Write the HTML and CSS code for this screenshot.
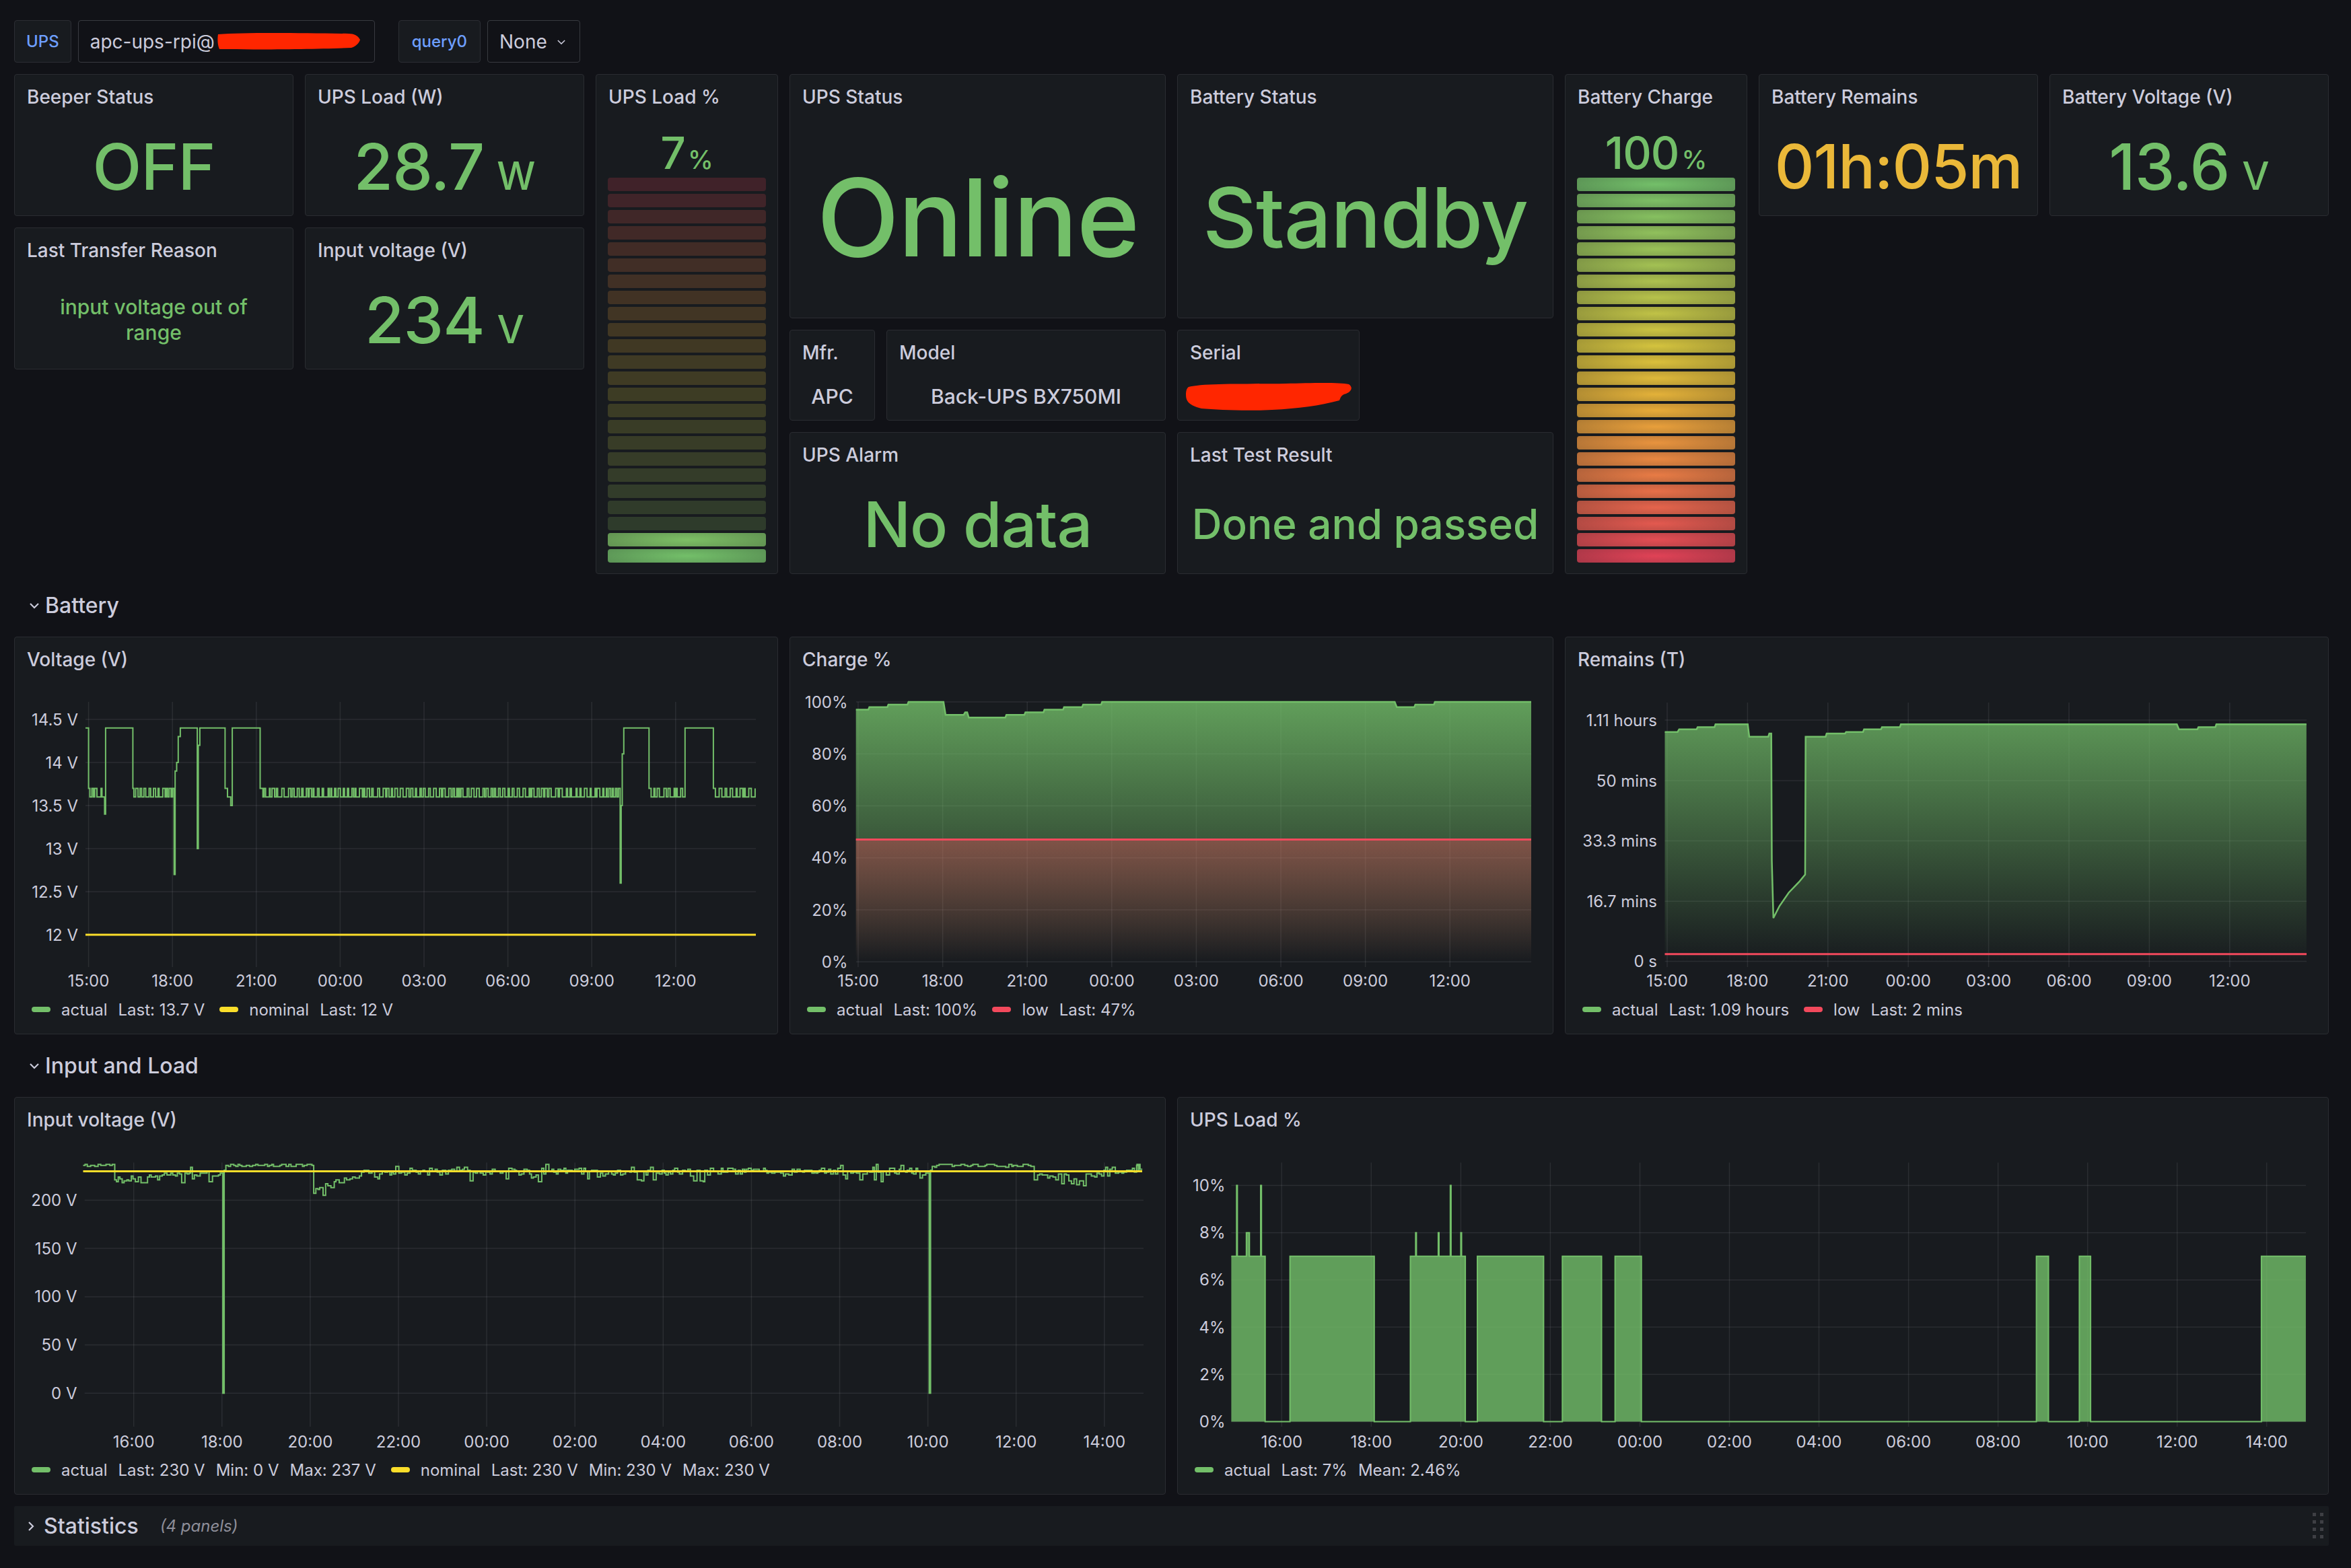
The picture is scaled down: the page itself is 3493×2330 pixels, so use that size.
FILE: index.html
```html
<!DOCTYPE html>
<html lang="en">
<head>
<meta charset="utf-8">
<title>UPS Dashboard</title>
<link rel="stylesheet" href="styles.css">
</head>
<body>
<div class="topbar">
  <div class="var-label">UPS</div>
  <div class="var-input">apc-ups-rpi@<svg class="redact-host" width="214" height="28" viewBox="0 0 214 28"><path d="M2 4 C40 1 120 2 196 3 C204 3 210 6 213 12 C211 18 206 22 200 24 C150 26 60 27 4 26 C1 20 1 10 2 4 Z" fill="#ff2600"/></svg></div>
  <div class="var-label q">query0</div>
  <div class="var-select">None<svg class="chev" width="14" height="8" viewBox="0 0 14 8"><path d="M1 1 L7 7 L13 1" fill="none" stroke="#ccccdc" stroke-width="1.8"/></svg></div>
</div>

<div class="grid">
  <!-- row 1 stats -->
  <div class="panel p-beeper">
    <div class="ph">Beeper Status</div>
    <div class="stat-body"><span class="val v95">OFF</span></div>
  </div>
  <div class="panel p-loadw">
    <div class="ph">UPS Load (W)</div>
    <div class="stat-body"><span class="val v95">28.7<span class="unit">W</span></span></div>
  </div>
  <div class="panel p-loadpct">
    <div class="ph">UPS Load %</div>
    <div class="gauge">
      <div class="gauge-val">7<span class="gunit">%</span></div>
      <div class="segs" id="segs-load"></div>
    </div>
  </div>
  <div class="panel p-upsstatus">
    <div class="ph">UPS Status</div>
    <div class="stat-body"><span class="val v-online">Online</span></div>
  </div>
  <div class="panel p-batstatus">
    <div class="ph">Battery Status</div>
    <div class="stat-body"><span class="val v-standby">Standby</span></div>
  </div>
  <div class="panel p-batcharge">
    <div class="ph">Battery Charge</div>
    <div class="gauge">
      <div class="gauge-val">100<span class="gunit">%</span></div>
      <div class="segs" id="segs-charge"></div>
    </div>
  </div>
  <div class="panel p-remains">
    <div class="ph">Battery Remains</div>
    <div class="stat-body"><span class="val v92 yellow">01h:05m</span></div>
  </div>
  <div class="panel p-batvolt">
    <div class="ph">Battery Voltage (V)</div>
    <div class="stat-body"><span class="val v95">13.6<span class="unit">V</span></span></div>
  </div>

  <div class="panel p-transfer">
    <div class="ph">Last Transfer Reason</div>
    <div class="stat-body"><span class="val v-reason">input voltage out of range</span></div>
  </div>
  <div class="panel p-involt">
    <div class="ph">Input voltage (V)</div>
    <div class="stat-body"><span class="val v95">234<span class="unit">V</span></span></div>
  </div>

  <div class="panel p-mfr">
    <div class="ph">Mfr.</div>
    <div class="stat-body"><span class="val v-small">APC</span></div>
  </div>
  <div class="panel p-model">
    <div class="ph">Model</div>
    <div class="stat-body"><span class="val v-small">Back-UPS BX750MI</span></div>
  </div>
  <div class="panel p-serial">
    <div class="ph">Serial</div>
    <div class="stat-body serial-body"><svg width="250" height="44" viewBox="0 0 250 44"><path d="M6 8 C30 2 90 4 150 3 C190 2 230 1 244 4 C250 8 249 14 240 18 C232 20 232 24 230 28 C200 36 170 40 130 42 C90 44 50 42 25 40 C8 36 2 30 2 20 C2 14 3 10 6 8 Z" fill="#ff2600"/></svg></div>
  </div>

  <div class="panel p-alarm">
    <div class="ph">UPS Alarm</div>
    <div class="stat-body"><span class="val v-nodata">No data</span></div>
  </div>
  <div class="panel p-test">
    <div class="ph">Last Test Result</div>
    <div class="stat-body"><span class="val v-done">Done and passed</span></div>
  </div>

  <!-- Battery row -->
  <div class="row-h r-battery"><svg class="row-chev" width="16" height="10" viewBox="0 0 16 10"><path d="M2 2 L8 8 L14 2" fill="none" stroke="#ccccdc" stroke-width="2.2"/></svg>Battery</div>

  <div class="panel p-vchart">
    <div class="ph">Voltage (V)</div>
    <svg class="chart" width="1133" height="472" viewBox="1 64 1133 472">
      <g class="grid-l">
        <path d="M106 123H1102M106 187H1102M106 251H1102M106 315H1102M106 379H1102M106 443H1102"/>
        <path d="M110.6 97V491M235.2 97V491M359.8 97V491M484.4 97V491M609 97V491M733.6 97V491M858.2 97V491M982.8 97V491"/>
      </g>
      <g class="ylab">
        <text x="95" y="131.5">14.5 V</text><text x="95" y="195.5">14 V</text><text x="95" y="259.5">13.5 V</text>
        <text x="95" y="323.5">13 V</text><text x="95" y="387.5">12.5 V</text><text x="95" y="451.5">12 V</text>
      </g>
      <g class="xlab">
        <text x="110.6" y="520">15:00</text><text x="235.2" y="520">18:00</text><text x="359.8" y="520">21:00</text><text x="484.4" y="520">00:00</text>
        <text x="609" y="520">03:00</text><text x="733.6" y="520">06:00</text><text x="858.2" y="520">09:00</text><text x="982.8" y="520">12:00</text>
      </g>
      <path d="M106 443H1102" stroke="#fade2a" stroke-width="3" fill="none"/>
      <path id="v-actual" d="" stroke="#73bf69" stroke-width="2" fill="none"/>
    </svg>
    <div class="legend">
      <div class="lg-item"><span class="lg-mark green"></span>actual<span class="lg-stat">Last: 13.7 V</span></div>
      <div class="lg-item"><span class="lg-mark yellowm"></span>nominal<span class="lg-stat">Last: 12 V</span></div>
    </div>
  </div>

  <div class="panel p-cchart">
    <div class="ph">Charge %</div>
    <svg class="chart" width="1133" height="472" viewBox="1 64 1133 472">
      <defs>
        <linearGradient id="gC" gradientUnits="userSpaceOnUse" x1="0" y1="97" x2="0" y2="483.3">
          <stop offset="0" stop-color="#73bf69" stop-opacity="0.8"/><stop offset="1" stop-color="#73bf69" stop-opacity="0"/>
        </linearGradient>
        <linearGradient id="gCr" gradientUnits="userSpaceOnUse" x1="0" y1="97" x2="0" y2="483.3">
          <stop offset="0" stop-color="#f2495c" stop-opacity="0.8"/><stop offset="1" stop-color="#f2495c" stop-opacity="0"/>
        </linearGradient>
      </defs>
      <g class="grid-l">
        <path d="M99 97H1102M99 174.3H1102M99 251.5H1102M99 328.8H1102M99 406H1102M99 483.3H1102"/>
        <path d="M102 97V491M227.6 97V491M353.2 97V491M478.8 97V491M604.4 97V491M730 97V491M855.6 97V491M981.2 97V491"/>
      </g>
      <g class="ylab">
        <text x="86.5" y="105.5">100%</text><text x="86.5" y="182.8">80%</text><text x="86.5" y="260">60%</text>
        <text x="86.5" y="337.3">40%</text><text x="86.5" y="414.5">20%</text><text x="86.5" y="491.8">0%</text>
      </g>
      <g class="xlab">
        <text x="102" y="520">15:00</text><text x="227.6" y="520">18:00</text><text x="353.2" y="520">21:00</text><text x="478.8" y="520">00:00</text>
        <text x="604.4" y="520">03:00</text><text x="730" y="520">06:00</text><text x="855.6" y="520">09:00</text><text x="981.2" y="520">12:00</text>
      </g>
      <path id="c-fill" d="" fill="url(#gC)"/>
      <path d="M98.7 301.6H1102V483.3H98.7Z" fill="url(#gCr)"/>
      <path id="c-line" d="" stroke="#73bf69" stroke-width="2.5" fill="none"/>
      <path d="M98.7 301.6H1102" stroke="#f2495c" stroke-width="3" fill="none"/>
    </svg>
    <div class="legend">
      <div class="lg-item"><span class="lg-mark green"></span>actual<span class="lg-stat">Last: 100%</span></div>
      <div class="lg-item"><span class="lg-mark red"></span>low<span class="lg-stat">Last: 47%</span></div>
    </div>
  </div>

  <div class="panel p-rchart">
    <div class="ph">Remains (T)</div>
    <svg class="chart" width="1133" height="472" viewBox="1 64 1133 472">
      <defs>
        <linearGradient id="gR" gradientUnits="userSpaceOnUse" x1="0" y1="98" x2="0" y2="482.5">
          <stop offset="0" stop-color="#73bf69" stop-opacity="0.8"/><stop offset="1" stop-color="#73bf69" stop-opacity="0"/>
        </linearGradient>
        <linearGradient id="gRr" gradientUnits="userSpaceOnUse" x1="0" y1="98" x2="0" y2="482.5">
          <stop offset="0" stop-color="#f2495c" stop-opacity="0.8"/><stop offset="1" stop-color="#f2495c" stop-opacity="0"/>
        </linearGradient>
      </defs>
      <g class="grid-l">
        <path d="M148.5 124H1102M148.5 214H1102M148.5 303.4H1102M148.5 393.2H1102M148.5 482.5H1102"/>
        <path d="M152 98V491M271.4 98V491M390.8 98V491M510.2 98V491M629.6 98V491M749 98V491M868.4 98V491M987.8 98V491"/>
      </g>
      <g class="ylab">
        <text x="137" y="132.5">1.11 hours</text><text x="137" y="222.5">50 mins</text><text x="137" y="311.9">33.3 mins</text>
        <text x="137" y="401.7">16.7 mins</text><text x="137" y="491">0 s</text>
      </g>
      <g class="xlab">
        <text x="152" y="520">15:00</text><text x="271.4" y="520">18:00</text><text x="390.8" y="520">21:00</text><text x="510.2" y="520">00:00</text>
        <text x="629.6" y="520">03:00</text><text x="749" y="520">06:00</text><text x="868.4" y="520">09:00</text><text x="987.8" y="520">12:00</text>
      </g>
      <path id="r-fill" d="" fill="url(#gR)"/>
      <path d="M148.5 471.8H1102V482.5H148.5Z" fill="url(#gRr)"/>
      <path id="r-line" d="" stroke="#73bf69" stroke-width="2.5" fill="none"/>
      <path d="M148.5 471.8H1102" stroke="#f2495c" stroke-width="3" fill="none"/>
    </svg>
    <div class="legend">
      <div class="lg-item"><span class="lg-mark green"></span>actual<span class="lg-stat">Last: 1.09 hours</span></div>
      <div class="lg-item"><span class="lg-mark red"></span>low<span class="lg-stat">Last: 2 mins</span></div>
    </div>
  </div>

  <!-- Input and Load row -->
  <div class="row-h r-input"><svg class="row-chev" width="16" height="10" viewBox="0 0 16 10"><path d="M2 2 L8 8 L14 2" fill="none" stroke="#ccccdc" stroke-width="2.2"/></svg>Input and Load</div>

  <div class="panel p-ivchart">
    <div class="ph">Input voltage (V)</div>
    <svg class="chart" width="1709" height="472" viewBox="1 64 1709 472">
      <g class="grid-l">
        <path d="M104.7 153.4H1678M104.7 225.1H1678M104.7 296.9H1678M104.7 368.6H1678M104.7 440.3H1678"/>
        <path d="M177.7 97.5V490M308.8 97.5V490M439.9 97.5V490M571 97.5V490M702.1 97.5V490M833.2 97.5V490M964.3 97.5V490M1095.4 97.5V490M1226.5 97.5V490M1357.6 97.5V490M1488.7 97.5V490M1619.8 97.5V490"/>
      </g>
      <g class="ylab">
        <text x="93.5" y="161.9">200 V</text><text x="93.5" y="233.6">150 V</text><text x="93.5" y="305.4">100 V</text>
        <text x="93.5" y="377.1">50 V</text><text x="93.5" y="448.8">0 V</text>
      </g>
      <g class="xlab">
        <text x="177.7" y="521">16:00</text><text x="308.8" y="521">18:00</text><text x="439.9" y="521">20:00</text><text x="571" y="521">22:00</text>
        <text x="702.1" y="521">00:00</text><text x="833.2" y="521">02:00</text><text x="964.3" y="521">04:00</text><text x="1095.4" y="521">06:00</text>
        <text x="1226.5" y="521">08:00</text><text x="1357.6" y="521">10:00</text><text x="1488.7" y="521">12:00</text><text x="1619.8" y="521">14:00</text>
      </g>
      <path id="iv-line" d="" stroke="#73bf69" stroke-width="2" fill="none"/>
      <path d="M102.5 110.5H1676" stroke="#fade2a" stroke-width="3" fill="none"/>
    </svg>
    <div class="legend">
      <div class="lg-item"><span class="lg-mark green"></span>actual<span class="lg-stat">Last: 230 V</span><span class="lg-stat">Min: 0 V</span><span class="lg-stat">Max: 237 V</span></div>
      <div class="lg-item"><span class="lg-mark yellowm"></span>nominal<span class="lg-stat">Last: 230 V</span><span class="lg-stat">Min: 230 V</span><span class="lg-stat">Max: 230 V</span></div>
    </div>
  </div>

  <div class="panel p-lchart">
    <div class="ph">UPS Load %</div>
    <svg class="chart" width="1709" height="472" viewBox="1 64 1709 472">
      <g class="grid-l">
        <path d="M80.4 131.5H1677M80.4 201.7H1677M80.4 271.9H1677M80.4 342.1H1677M80.4 412.3H1677M80.4 482.5H1677"/>
        <path d="M155.3 97.5V490M288.3 97.5V490M421.4 97.5V490M554.4 97.5V490M687.5 97.5V490M820.5 97.5V490M953.5 97.5V490M1086.6 97.5V490M1219.6 97.5V490M1352.7 97.5V490M1485.7 97.5V490M1618.7 97.5V490"/>
      </g>
      <g class="ylab">
        <text x="71.5" y="140">10%</text><text x="71.5" y="210.2">8%</text><text x="71.5" y="280.4">6%</text>
        <text x="71.5" y="350.6">4%</text><text x="71.5" y="420.8">2%</text><text x="71.5" y="491">0%</text>
      </g>
      <g class="xlab">
        <text x="155.3" y="521">16:00</text><text x="288.3" y="521">18:00</text><text x="421.4" y="521">20:00</text><text x="554.4" y="521">22:00</text>
        <text x="687.5" y="521">00:00</text><text x="820.5" y="521">02:00</text><text x="953.5" y="521">04:00</text><text x="1086.6" y="521">06:00</text>
        <text x="1219.6" y="521">08:00</text><text x="1352.7" y="521">10:00</text><text x="1485.7" y="521">12:00</text><text x="1618.7" y="521">14:00</text>
      </g>
      <path id="l-fill" d="" fill="#73bf69" fill-opacity="0.8"/>
      <path id="l-line" d="" stroke="#73bf69" stroke-width="2" fill="none"/>
    </svg>
    <div class="legend">
      <div class="lg-item"><span class="lg-mark green"></span>actual<span class="lg-stat">Last: 7%</span><span class="lg-stat">Mean: 2.46%</span></div>
    </div>
  </div>

  <div class="row-h r-stats collapsed"><svg class="row-chev" width="10" height="16" viewBox="0 0 10 16"><path d="M2 2 L8 8 L2 14" fill="none" stroke="#ccccdc" stroke-width="2.2"/></svg>Statistics<span class="row-count">(4 panels)</span>
    <svg class="drag" width="18" height="40" viewBox="0 0 18 40"><g fill="#3e3f44"><rect x="0" y="0" width="5" height="5"/><rect x="11" y="0" width="5" height="5"/><rect x="0" y="11" width="5" height="5"/><rect x="11" y="11" width="5" height="5"/><rect x="0" y="22" width="5" height="5"/><rect x="11" y="22" width="5" height="5"/><rect x="0" y="33" width="5" height="5"/><rect x="11" y="33" width="5" height="5"/></g></svg>
  </div>
</div>
<script src="script.js"></script>
</body>
</html>
```

FILE: styles.css
```css
* { box-sizing: border-box; }
html, body { margin: 0; padding: 0; }
body {
  width: 3493px;
  height: 2330px;
  overflow: hidden;
  background: #111217;
  color: #ccccdc;
  font-family: Inter, "Noto Sans", "Liberation Sans", sans-serif;
}

/* ---------- top variable bar ---------- */
.topbar {
  display: flex;
  align-items: center;
  height: 63px;
  margin: 30px 0 0 21px;
}
.var-label {
  height: 63px;
  display: flex;
  align-items: center;
  padding: 0 17px;
  background: #181b1f;
  border: 1px solid #2c2e34;
  border-radius: 4px;
  color: #6e9fff;
  font-size: 24px;
  font-weight: 500;
}
.var-label.q { margin-left: 35px; padding: 0 19px; }
.var-input {
  position: relative;
  width: 441px;
  height: 63px;
  margin-left: 10px;
  display: flex;
  align-items: center;
  padding-left: 17px;
  background: #111217;
  border: 1px solid #383a40;
  border-radius: 4px;
  font-size: 28px;
}
.redact-host {
  position: absolute;
  left: 205px;
  top: 16px;
}
.var-select {
  width: 138px;
  height: 63px;
  margin-left: 10px;
  display: flex;
  align-items: center;
  padding-left: 17px;
  background: #111217;
  border: 1px solid #383a40;
  border-radius: 4px;
  font-size: 28px;
}
.var-select .chev { margin-left: 15px; margin-top: 2px; width: 12px; height: 7px; }

/* ---------- dashboard grid ---------- */
.grid {
  display: grid;
  grid-template-columns: repeat(24, minmax(0, 1fr));
  grid-auto-rows: 59px;
  gap: 17px;
  margin: 17px 33px 0 21px;
}
.panel {
  background: #181b1f;
  border: 1px solid #2a2c31;
  border-radius: 4px;
  display: flex;
  flex-direction: column;
  overflow: hidden;
  min-width: 0;
}
.ph {
  flex: none;
  height: 63px;
  display: flex;
  align-items: center;
  padding: 2px 18px 0;
  font-size: 28px;
  font-weight: 500;
  color: #ccccdc;
  white-space: nowrap;
}

/* placements */
.p-beeper    { grid-column: 1 / span 3;  grid-row: 1 / span 3; }
.p-loadw     { grid-column: 4 / span 3;  grid-row: 1 / span 3; }
.p-loadpct   { grid-column: 7 / span 2;  grid-row: 1 / span 10; }
.p-upsstatus { grid-column: 9 / span 4;  grid-row: 1 / span 5; }
.p-batstatus { grid-column: 13 / span 4; grid-row: 1 / span 5; }
.p-batcharge { grid-column: 17 / span 2; grid-row: 1 / span 10; }
.p-remains   { grid-column: 19 / span 3; grid-row: 1 / span 3; }
.p-batvolt   { grid-column: 22 / span 3; grid-row: 1 / span 3; }
.p-transfer  { grid-column: 1 / span 3;  grid-row: 4 / span 3; }
.p-involt    { grid-column: 4 / span 3;  grid-row: 4 / span 3; }
.p-mfr       { grid-column: 9 / span 1;  grid-row: 6 / span 2; }
.p-model     { grid-column: 10 / span 3; grid-row: 6 / span 2; }
.p-serial    { grid-column: 13 / span 2; grid-row: 6 / span 2; }
.p-alarm     { grid-column: 9 / span 4;  grid-row: 8 / span 3; }
.p-test      { grid-column: 13 / span 4; grid-row: 8 / span 3; }
.r-battery   { grid-column: 1 / -1; grid-row: 11; }
.p-vchart    { grid-column: 1 / span 8;  grid-row: 12 / span 8; }
.p-cchart    { grid-column: 9 / span 8;  grid-row: 12 / span 8; }
.p-rchart    { grid-column: 17 / span 8; grid-row: 12 / span 8; }
.r-input     { grid-column: 1 / -1; grid-row: 20; }
.p-ivchart   { grid-column: 1 / span 12; grid-row: 21 / span 8; }
.p-lchart    { grid-column: 13 / span 12; grid-row: 21 / span 8; }
.r-stats     { grid-column: 1 / -1; grid-row: 29; }

/* ---------- stat panels ---------- */
.stat-body {
  flex: 1;
  display: flex;
  align-items: center;
  justify-content: center;
  min-height: 0;
}
.val {
  color: #73bf69;
  font-weight: 500;
  line-height: 1;
  white-space: nowrap;
}
.val.yellow { color: #eab839; }
.v95 { font-size: 95px; letter-spacing: -1px; }
.v92 { font-size: 91px; letter-spacing: -1px; }
.unit { font-size: 57px; margin-left: 19px; letter-spacing: 0; }
.v-online { font-size: 160px; letter-spacing: -2px; }
.v-standby { font-size: 124px; letter-spacing: -1px; }
.v-nodata { font-size: 93px; letter-spacing: -1px; }
.v-done { font-size: 62px; }
.v-small { font-size: 30px; color: #ccccdc; }
.v-reason {
  font-size: 30px;
  line-height: 38px;
  white-space: normal;
  text-align: center;
  max-width: 320px;
}

/* ---------- bar gauges ---------- */
.gauge {
  flex: 1;
  display: flex;
  flex-direction: column;
  padding: 0 17px 16px 17px;
  min-height: 0;
}
.gauge-val {
  margin: 20px 0 4px;
  height: 66px;
  font-size: 66px;
  line-height: 66px;
  font-weight: 500;
  color: #73bf69;
  text-align: center;
  letter-spacing: -1px;
}
.gunit { font-size: 38px; margin-left: 4px; letter-spacing: 0; }
.segs {
  flex: 1;
  display: flex;
  flex-direction: column;
  gap: 4px;
}
.seg {
  flex: 1;
  border-radius: 4px;
}

/* ---------- row headers ---------- */
.row-h {
  display: flex;
  align-items: center;
  font-size: 32px;
  font-weight: 500;
  color: #ccccdc;
}
.row-chev { margin-left: 22px; margin-right: 8px; flex: none; }
.r-stats {
  background: #181b1f;
  border-radius: 2px;
}
.r-stats .row-chev { margin-left: 20px; margin-right: 14px; }
.row-count {
  margin-left: 32px;
  font-size: 24px;
  font-style: italic;
  font-weight: 400;
  color: #8e8e99;
}
.drag { margin-left: auto; margin-right: 6px; }

/* ---------- charts ---------- */
.chart { display: block; flex: none; }
.grid-l path { stroke: rgba(204, 204, 220, 0.1); stroke-width: 1.5; fill: none; }
.ylab text, .xlab text {
  font-family: Inter, "Noto Sans", sans-serif;
  font-size: 24px;
  fill: #ccccdc;
}
.ylab text { text-anchor: end; }
.xlab text { text-anchor: middle; }
.legend {
  flex: none;
  height: 36px;
  display: flex;
  align-items: center;
  padding-left: 25px;
  font-size: 24px;
  color: #ccccdc;
  white-space: nowrap;
}
.lg-item { display: flex; align-items: center; margin-right: 22px; }
.lg-mark {
  width: 28px;
  height: 8px;
  border-radius: 4px;
  margin-right: 16px;
}
.lg-mark.green { background: #73bf69; }
.lg-mark.yellowm { background: #fade2a; }
.lg-mark.red { background: #f2495c; }
.lg-stat { margin-left: 16px; }
```

FILE: script.js
```js
(function () {
  function rng(seed) {
    var s = seed >>> 0;
    return function () {
      s = (Math.imul(s, 1664525) + 1013904223) >>> 0;
      return s / 4294967296;
    };
  }
  function f(n) { return Math.round(n * 10) / 10; }
  function stepLine(p) {
    var d = 'M' + f(p[0][0]) + ' ' + f(p[0][1]);
    for (var i = 1; i < p.length; i++) d += 'H' + f(p[i][0]) + 'V' + f(p[i][1]);
    return d;
  }
  function polyLine(p) {
    return 'M' + p.map(function (q) { return f(q[0]) + ' ' + f(q[1]); }).join('L');
  }
  function set(id, d) { var e = document.getElementById(id); if (e) e.setAttribute('d', d); }

  /* ---- Battery voltage ---- */
  (function () {
    var vx = function (z) { return z / 1.3067 - 21; };
    var vy = function (v) { return 123 + (14.5 - v) * 128; };
    var r = rng(11), P = [];
    function a(z, v) { P.push([vx(z), vy(v)]); }
    function osc(z0, z1) {
      var z = z0, hi = true;
      while (z < z1) { a(z, hi ? 13.7 : 13.6); hi = !hi; z += hi ? (2 + r() * 7) : (1.5 + r() * 4); }
    }
    a(166, 14.4); osc(172, 203); a(203, 13.4); a(205, 14.4);
    osc(258, 338); a(338, 12.7); a(340, 13.9); a(343, 14.0); a(346, 14.3); a(350, 14.4);
    a(383, 13.0); a(385, 14.2); a(388, 14.4);
    osc(437, 448); a(448, 13.5); a(451, 14.4);
    osc(505, 1204); a(1204, 12.6); a(1206, 13.5); a(1208, 14.1); a(1211, 14.4);
    osc(1260, 1330); a(1330, 14.4); osc(1385, 1466); a(1466, 13.7);
    set('v-actual', stepLine(P));
  })();

  /* ---- Charge ---- */
  (function () {
    var cx = function (z) { return z / 1.3067 - 13; };
    var cy = function (v) { return 483.3 - v * 3.863; };
    var raw = [[146,97],[170,97],[172,98],[207,98],[209,99],[246,99],[248,100],[316,100],[320,95],[355,95],[358,96],[362,96],[365,94],[436,94],[438,95],[473,95],[475,96],[510,96],[512,97],[548,97],[550,98],[585,98],[587,99],[622,99],[624,100],[1192,100],[1196,98],[1230,98],[1232,99],[1268,99],[1270,100],[1457,100]];
    var P = raw.map(function (q) { return [cx(q[0]), cy(q[1])]; });
    var line = polyLine(P);
    set('c-line', line);
    set('c-fill', line + 'L' + f(P[P.length - 1][0]) + ' 483.3L' + f(P[0][0]) + ' 483.3Z');
  })();

  /* ---- Remains ---- */
  (function () {
    var rx = function (z) { return z / 1.3143 - 25; };
    var ry = function (z) { return z / 2.529 - 7; };
    var raw = [[228,376],[253,376],[256,366],[290,366],[292,358],[325,358],[327,347],[390,347],[393,394],[430,394],[432,382],[436,382],[437,860],[440,1075],[452,1030],[470,980],[490,940],[502,912],[503,394],[542,394],[544,382],[580,382],[582,376],[615,376],[617,366],[650,366],[652,358],[687,358],[689,347],[1228,347],[1232,366],[1268,366],[1270,358],[1303,358],[1305,347],[1481,347]];
    var P = raw.map(function (q) { return [rx(q[0]), ry(q[1])]; });
    var line = polyLine(P);
    set('r-line', line);
    set('r-fill', line + 'L' + f(P[P.length - 1][0]) + ' 482.5L' + f(P[0][0]) + ' 482.5Z');
  })();

  /* ---- Input voltage ---- */
  (function () {
    var ix = function (z) { return z / 0.8909 - 21; };
    var iy = function (v) { return 440.3 - v * 1.4346; };
    var r = rng(5), P = [];
    function base(z) {
      if (z < 150) return 231.5;
      if (z < 210) return 222;
      if (z < 295) return 227.5;
      if (z < 415) return 231.5;
      if (z < 480) return 210 + (z - 415) / 65 * 17;
      if (z < 1230) return 229.5;
      if (z < 1365) return 231.5;
      if (z < 1460) return 224;
      return 231;
    }
    function amp(z) {
      if (z < 150) return 1;
      if (z < 210) return 8;
      if (z < 295) return 6;
      if (z < 415) return 1.5;
      if (z < 480) return 6;
      if (z < 1230) return 7;
      if (z < 1365) return 1.5;
      if (z < 1460) return 8;
      return 7;
    }
    var drops = [295, 1230], di = 0, z = 110;
    while (z < 1510) {
      if (di < drops.length && z >= drops[di]) {
        P.push([ix(drops[di]), iy(0)]);
        P.push([ix(drops[di] + 1.8), iy(231)]);
        z = drops[di] + 4; di++; continue;
      }
      var v = base(z) + (r() - 0.5) * amp(z);
      var big = amp(z) > 3 ? r() : 1;
      if (big < 0.08) v -= 4 + r() * 5;
      if (big > 0.96) v += 3 + r() * 3;
      v = Math.min(237, Math.round(v));
      P.push([ix(z), iy(v)]);
      z += 2 + r() * 2.5;
    }
    P.push([ix(1505), iy(237)]);
    P.push([ix(1509), iy(232)]);
    P.push([ix(1512), iy(232)]);
    set('iv-line', stepLine(P));
  })();

  /* ---- UPS load % ---- */
  (function () {
    var lx = function (z) { return z / 0.8945 - 9; };
    var ly = function (v) { return 482.5 - v * 35.1; };
    var raw = [[80,7],[87,10],[88,7],[100,8],[104,7],[119,10],[120,7],[125,0],[158,7],[270,0],[318,7],[325,8],[326,7],[355,8],[356,7],[371,10],[372,7],[385,8],[386,7],[391,0],[407,7],[495,0],[520,7],[572,0],[590,7],[625,0],[1150,7],[1166,0],[1207,7],[1222,0],[1449,7],[1508,7]];
    var P = raw.map(function (q) { return [lx(q[0]), ly(q[1])]; });
    var line = stepLine(P);
    set('l-line', line);
    var fill = 'M' + f(P[0][0]) + ' 482.5V' + f(P[0][1]);
    for (var i = 1; i < P.length; i++) fill += 'H' + f(P[i][0]) + 'V' + f(P[i][1]);
    fill += 'V482.5Z';
    set('l-fill', fill);
  })();

  /* ---- LCD bar gauges ---- */
  var stops = [[0, [115, 191, 105]], [0.45, [215, 195, 60]], [0.62, [232, 168, 56]], [0.8, [232, 118, 70]], [1, [224, 66, 86]]];
  function pal(t) {
    for (var i = 1; i < stops.length; i++) {
      if (t <= stops[i][0]) {
        var t0 = stops[i - 1][0], c0 = stops[i - 1][1], t1 = stops[i][0], c1 = stops[i][1];
        var k = (t - t0) / (t1 - t0);
        return c0.map(function (v, j) { return Math.round(v + (c1[j] - v) * k); });
      }
    }
    return stops[stops.length - 1][1];
  }
  function build(id, lit, tf) {
    var el = document.getElementById(id);
    if (!el) return;
    for (var i = 0; i < 24; i++) {
      var d = document.createElement('div');
      d.className = 'seg';
      var c = pal(tf(i)).join(',');
      if (lit(i)) {
        d.style.background = 'radial-gradient(ellipse 60% 95% at 50% 50%, rgb(' + c + ') 0%, rgba(' + c + ',0.72) 100%)';
      } else {
        d.style.background = 'rgba(' + c + ',0.2)';
      }
      el.appendChild(d);
    }
  }
  build('segs-load', function (i) { return i >= 22; }, function (i) { return 1 - i / 23; });
  build('segs-charge', function () { return true; }, function (i) { return i / 23; });
})();
```
